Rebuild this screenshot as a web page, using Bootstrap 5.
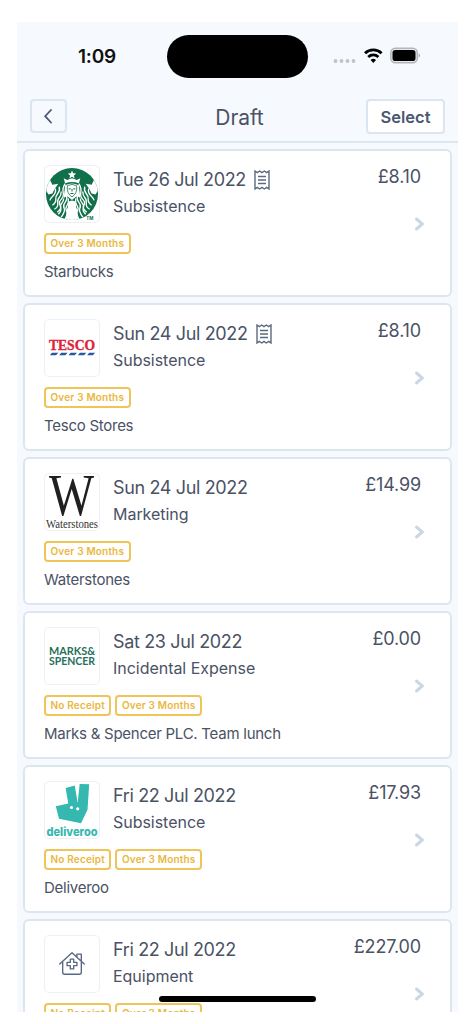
<!DOCTYPE html>
<html lang="en">
<head>
<meta charset="utf-8">
<meta name="viewport" content="width=device-width, initial-scale=1">
<title>Draft expenses</title>
<link href="https://cdn.jsdelivr.net/npm/bootstrap@5.3.0/dist/css/bootstrap.min.css" rel="stylesheet">
<style>
  body { background: #fff; font-family: Inter, "Liberation Sans", sans-serif; color: #4a5265; height: 1024px; overflow: hidden; }
  .phone { width: 441px; height: 990px; margin: 22px 0 0 17px; background: #f6f9fd; }
  .statusbar { height: 70px; padding: 12px 38px 0 61px; }
  .clock { font-size: 19px; font-weight: 600; color: #111; letter-spacing: -.2px; line-height: 45px; width: 89px; }
  .island { width: 141px; height: 43px; margin-top: 1px; background: #000; }
  .topbar { height: 51px; padding: 7px 13px 0; border-bottom: 2px solid #dde7f0; }
  .btn-line { border: 2px solid #dce6f0; border-radius: 4px; color: #4a5874; padding: 0; }
  .btn-back { width: 37px; height: 34px; }
  .btn-select { width: 79px; height: 35px; background: #fff; font-size: 16.500px; font-weight: 600; line-height: 32px; }
  .screen-title { font-size: 21px; line-height: 37px; letter-spacing: -.1px; padding-left: 46px; }
  .claims { padding: 6px 6px 0; gap: 6px; }
  .claim { height: 148px; border: 2px solid #dce6f0; border-radius: 6px; padding: 14px 29px 0 19px; background: #fff; flex: none; }
  .logo { width: 56px; height: 58px; border: 1.5px solid #eff0f3; border-radius: 5px; flex: none; }
  .logo svg { display: block; width: 100%; height: 100%; }
  .label-block { padding-left: 13px; }
  .date { font-size: 18px; line-height: 29px; letter-spacing: -.36px; }
  .kind { font-size: 16px; line-height: 25px; letter-spacing: -.03px; }
  .price { font-size: 18px; line-height: 23px; letter-spacing: -.15px; }
  .tags { gap: 4px; margin-top: 10px; }
  .tag { border: 2px solid #efc459; border-radius: 4px; color: #eab73d; font-size: 10px; font-weight: 600; line-height: 17px; height: 21px; padding: 0 4.500px; letter-spacing: .18px; }
  .note { font-size: 15px; line-height: 21px; margin-top: 7px; letter-spacing: -.26px; }
  .arrow { margin-top: 28px; margin-right: -5px; }
  .homebar { width: 157px; height: 6px; left: 142px; bottom: 10px; background: #000; }
</style>
<script src="https://cdn.jsdelivr.net/npm/bootstrap@5.3.0/dist/js/bootstrap.bundle.min.js"></script>
</head>
<body>
<svg width="0" height="0" class="position-absolute">
  <symbol id="receipt" viewBox="0 0 16 20"><path d="M1 1l2.300 1.600L5.700 1 8 2.600 10.300 1l2.400 1.600L15 1v18l-2.300-1.600L10.300 19 8 17.400 5.700 19l-2.400-1.600L1 19zM4 6.500h8M4 10h8M4 13.500h8" fill="none" stroke="#5d6980" stroke-width="1.400"/></symbol>
  <symbol id="chev" viewBox="0 0 12 16"><path d="M2.500 3L8.300 8l-5.800 5" fill="none" stroke="#cbd7e4" stroke-width="3" stroke-linecap="round"/></symbol>
</svg>
<main class="phone position-relative overflow-hidden">
  <div class="statusbar d-flex align-items-start">
    <div class="clock">1:09</div>
    <div class="island rounded-pill"></div>
    <svg class="ms-auto" width="90" height="44" viewBox="0 0 90 44">
      <g fill="#bfc2c7"><circle cx="5.500" cy="27" r="1.900"/><circle cx="11.500" cy="27" r="1.900"/><circle cx="17.500" cy="27" r="1.900"/><circle cx="23.500" cy="27" r="1.900"/></g>
      <g fill="none" stroke="#000" stroke-width="2.800"><path d="M35 19.300a12 12 0 0 1 16.600 0M38.200 22.900a7.400 7.400 0 0 1 10.200 0"/></g>
      <path d="M43.300 28.900l-2.700-2.800a4 4 0 0 1 5.400 0z"/>
      <rect x="60.800" y="14.300" width="26.500" height="14.500" rx="4.500" fill="#e4e6e9" stroke="#b3b6ba" stroke-width="1.500"/><rect x="62.500" y="16" width="23" height="11" rx="2.800"/><path d="M88.700 19.500q1.300.4 1.300 2t-1.300 2z" fill="#a5a8ac"/>
    </svg>
  </div>
  <header class="topbar d-flex justify-content-between align-items-start">
    <button class="btn btn-line btn-back" aria-label="Back"><svg class="d-block" style="margin-left:11px" width="10" height="16" viewBox="0 0 10 16"><path d="M8 2L2.200 8.200 8 14.500" fill="none" stroke="#4a5874" stroke-width="1.800" stroke-linecap="round"/></svg></button>
    <div class="screen-title">Draft</div>
    <button class="btn btn-line btn-select">Select</button>
  </header>
  <div class="claims d-flex flex-column" id="claims"></div>
  <div class="homebar position-absolute rounded-pill"></div>
</main>
<script>
  const serif = 'font-family="Liberation Serif, serif"';
  // One half of the siren emblem: long hair, tail scales and the raised fin
  const half = `<g fill="none" stroke="#fff" stroke-width="1.350">
      <path d="M20.500 18q-3 5-2 9t-2 7-1 6-3 7"/><path d="M22 30q1 4-1.500 7t-1 6-3 9"/><path d="M19 33q0 3-2 5t-1 5-2.500 6"/>
      <path d="M23.500 33q1 4-1 7t-.5 6-2 9"/><path d="M14.500 21q1 4-1.500 7t-2 6-3.500 6"/><path d="M16.500 26q0 4-2 6t-1.500 6-3.500 6"/>
      <path d="M10.500 23q1 4-2 7t-3.500 5"/><path d="M25 36q0 4-1.500 7t0 6-1 8"/></g>
    <path d="M0 23l4.500-10 3 6 6-1-4 6-2 4-4 1z" fill="#fff"/>`;
  const logos = {
    starbucks: `<defs><clipPath id="disc"><circle cx="27.500" cy="28.500" r="26.500"/></clipPath></defs><g clip-path="url(#disc)"><rect width="55" height="57" fill="#10704a"/>
      ${half}<g transform="matrix(-1 0 0 1 55 0)">${half}</g>
      <path d="M27.500 4.500l1.200 2.900 3.100.2-2.400 2 .8 3-2.700-1.700-2.700 1.700.8-3-2.400-2 3.100-.2zM19 12.500l3.500 1.800 5-1.800 5 1.800 3.500-1.800-1.500 5q-7-2.500-14 0z" fill="#fff"/>
      <path d="M20.500 19.500q7-3.500 14 0l1.500 13-3.500-2-5 4-5-4-3.500 2z" fill="#fff"/>
      <path d="M22.800 20q4.700-2.500 9.400 0 1 8-4.700 11.500Q21.800 28 22.800 20z" fill="#fff" stroke="#10704a" stroke-width=".8"/>
      <path d="M24 23.300h2.300m2.400 0H31m-3.500 0v2.700m-1.500 2h3" stroke="#10704a" fill="none"/>
      <path d="M27.500 35q4.500.5 4 6-.5 3 1.500 8l1 8H21l1-8q2-5 1.500-8-.5-5.500 4-6z" fill="#fff"/></g>
      <text x="42" y="55" font-size="4.500" font-weight="700" fill="#10704a">TM</text>`,
    tesco: `<text x="4" y="31" ${serif} font-weight="700" font-size="15" textLength="47" lengthAdjust="spacingAndGlyphs" fill="#dc2338" stroke="#dc2338" stroke-width=".35">TESCO</text>
      <path d="M7 33.300h6.500l-2.200 2.500H5zM16.500 33.300H23l-2.200 2.500h-6.300zM26 33.300h6.500l-2.200 2.500H24zM35.500 33.300H42l-2.200 2.500h-6.300zM45 33.300h6l-2.200 2.500H43z" fill="#2457a5"/>`,
    waterstones: `<text x="4" y="42" ${serif} font-size="61" textLength="46" lengthAdjust="spacingAndGlyphs" fill="#202020">W</text>
      <text x="1" y="55" ${serif} font-size="13.500" textLength="53" lengthAdjust="spacingAndGlyphs" fill="#333">Waterstones</text>`,
    marks: `<g font-family="Lato, sans-serif" font-weight="700" font-size="12" fill="#27705a"><text x="4" y="27.500" textLength="47" lengthAdjust="spacingAndGlyphs">MARKS&amp;</text><text x="4" y="38" textLength="47" lengthAdjust="spacingAndGlyphs">SPENCER</text></g>`,
    deliveroo: `<path d="M21 6l9.300-2.500 3 17.800 2-19.300 9.700.3-1.700 26L36.700 42l-22.400-4.700L11 24.700 23.700 22z" fill="#35b8af"/><circle cx="27" cy="26" r="1.600" fill="#fff"/><circle cx="33.300" cy="27.300" r="1.600" fill="#fff"/>
      <text x="1.500" y="55.200" font-family="Inter, sans-serif" font-size="11.500" font-weight="800" textLength="52" lengthAdjust="spacingAndGlyphs" fill="#35b8af">deliveroo</text>`,
    home: `<g fill="none" stroke="#5b6881" stroke-width="1.400" stroke-linejoin="round" stroke-linecap="round"><path d="M15 28.500L27.500 17 40 28.500M18 26.500V37q0 2 2 2h15q2 0 2-2V26.500M32.500 21v-2.500h4.500v6.500"/><path d="M25.800 23.500h3.400v3.300h3.300v3.400h-3.300v3.300h-3.400v-3.300h-3.300v-3.400h3.300z"/></g>`
  };
  const receiptIcon = '<svg class="ms-2" width="16" height="20"><use href="#receipt"/></svg>';
  const items = [
    { logo: 'starbucks', date: 'Tue 26 Jul 2022', kind: 'Subsistence', price: '£8.10', note: 'Starbucks', icon: true, tags: ['Over 3 Months'] },
    { logo: 'tesco', date: 'Sun 24 Jul 2022', kind: 'Subsistence', price: '£8.10', note: 'Tesco Stores', icon: true, tags: ['Over 3 Months'] },
    { logo: 'waterstones', date: 'Sun 24 Jul 2022', kind: 'Marketing', price: '£14.99', note: 'Waterstones', tags: ['Over 3 Months'] },
    { logo: 'marks', date: 'Sat 23 Jul 2022', kind: 'Incidental Expense', price: '£0.00', note: 'Marks &amp; Spencer PLC. Team lunch', tags: ['No Receipt', 'Over 3 Months'] },
    { logo: 'deliveroo', date: 'Fri 22 Jul 2022', kind: 'Subsistence', price: '£17.93', note: 'Deliveroo', tags: ['No Receipt', 'Over 3 Months'] },
    { logo: 'home', date: 'Fri 22 Jul 2022', kind: 'Equipment', price: '£227.00', note: '', tags: ['No Receipt', 'Over 3 Months'] }
  ];
  document.getElementById('claims').innerHTML = items.map(c => `
    <article class="claim">
      <div class="d-flex" style="height:58px">
        <div class="logo overflow-hidden"><svg viewBox="0 0 55 57">${logos[c.logo]}</svg></div>
        <div class="label-block flex-grow-1">
          <div class="date d-flex align-items-center">${c.date}${c.icon ? receiptIcon : ''}</div>
          <div class="kind">${c.kind}</div>
        </div>
        <div class="d-flex flex-column align-items-end"><div class="price">${c.price}</div><svg class="arrow flex-shrink-0" width="12" height="16"><use href="#chev"/></svg></div>
      </div>
      <div class="tags d-flex">${c.tags.map(t => `<span class="tag">${t}</span>`).join('')}</div>
      <div class="note">${c.note}</div>
    </article>`).join('');
</script>
</body>
</html>
